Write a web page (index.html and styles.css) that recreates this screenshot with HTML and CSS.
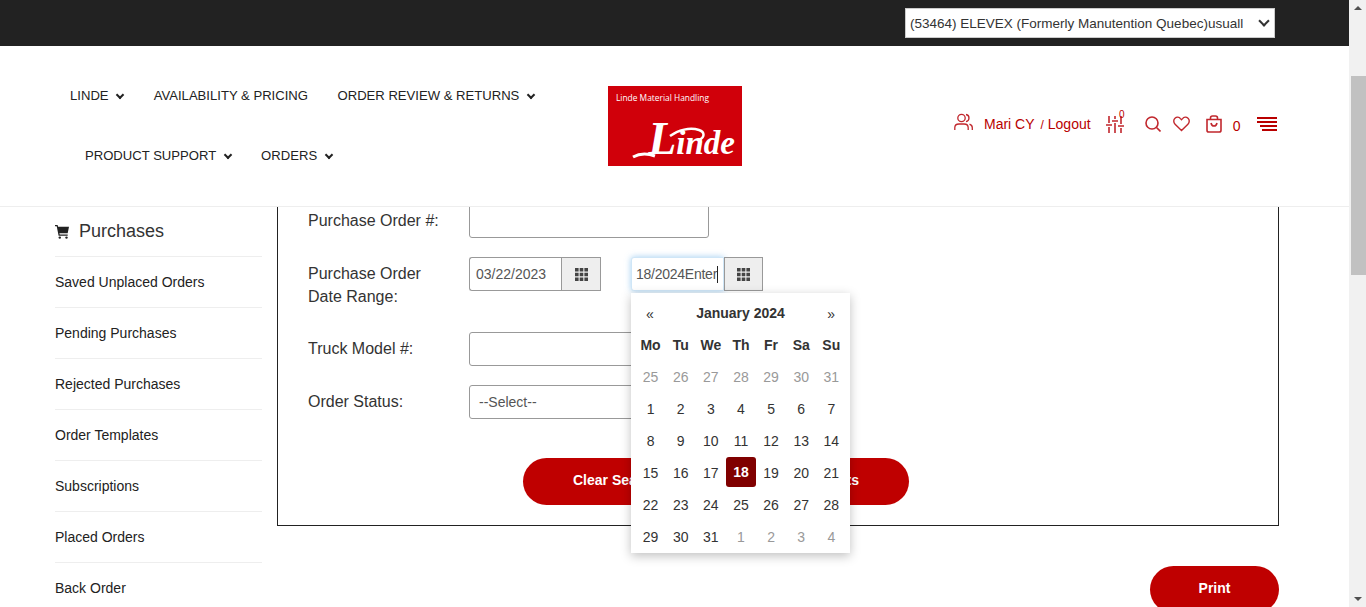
FILE: index.html
```html
<!DOCTYPE html>
<html lang="en">
<head>
    <meta charset="UTF-8">
    <meta name="viewport" content="width=device-width, initial-scale=1.0">
    <title>Purchases</title>
    <link rel="stylesheet" href="styles.css">
</head>
<body>
    <div class="page">
        <header class="site-header">
            <div class="topbar">
                <div class="select-wrap">
                    <select class="account-select">
                        <option>(53464) ELEVEX (Formerly Manutention Quebec)usuall</option>
                    </select>
                </div>
            </div>
            <div class="navbar">
                <nav class="main-nav">
                    <ul class="nav-row">
                        <li>LINDE <span class="caret"></span></li>
                        <li>AVAILABILITY &amp; PRICING</li>
                        <li>ORDER REVIEW &amp; RETURNS <span class="caret"></span></li>
                    </ul>
                    <ul class="nav-row nav-row-second">
                        <li>PRODUCT SUPPORT <span class="caret"></span></li>
                        <li>ORDERS <span class="caret"></span></li>
                    </ul>
                </nav>
                <div class="logo">
                    <span class="logo-tag">Linde Material Handling</span>
                    <svg class="logo-swoosh" width="134" height="80" viewBox="0 0 134 80">
                        <path d="M25 71c7-4 14-4 22-1" fill="none" stroke="#fff" stroke-width="3"/>
                        <path d="M62 50c8-6 20-9 29-6 6 2 6 7 0 10" fill="none" stroke="#fff" stroke-width="2.5"/>
                    </svg>
                    <span class="logo-name"><span class="logo-cap">L</span>inde</span>
                </div>
                <div class="user-tools">
                    <svg class="tool-user" width="19" height="18" viewBox="0 0 19 18" fill="none" stroke="#c1272d" stroke-width="1.3">
                        <circle cx="7.5" cy="5" r="3.7"/>
                        <path d="M.8 17v-2.2C.8 12.400 2.800 11 5 11h5c2.200 0 4.200 1.400 4.200 3.800V17"/>
                        <path d="M12 1.500c2 .3 3 2 3 3.600s-1 3.200-3 3.500M15.500 11.200c1.700.6 2.800 1.900 2.800 3.600V17"/>
                    </svg>
                    <span class="user-name">Mari CY</span>
                    <span class="user-logout"><small>/</small> Logout</span>
                    <span class="tool-filter">
                        <svg width="18" height="17" viewBox="0 0 18 17" fill="none" stroke="#c1272d" stroke-width="1.6">
                            <path d="M3 0v7M3 11v6M0 9h6M9 0v3M9 7v10M6 5h6M15 0v8M15 12v5M12 10h6"/>
                        </svg>
                        <sup>0</sup>
                    </span>
                    <svg class="tool-search" width="16" height="16" viewBox="0 0 16 16" fill="none" stroke="#c1272d" stroke-width="1.6">
                        <circle cx="7" cy="7" r="6"/>
                        <path d="M11.500 11.500L15.500 15.500"/>
                    </svg>
                    <svg class="tool-heart" width="18" height="16" viewBox="0 0 18 16" fill="none" stroke="#c1272d" stroke-width="1.5">
                        <path d="M9 14.800L2.200 8.200C.3 6.300.4 3.400 2.100 1.900c1.800-1.500 4.400-1.200 5.800.4L9 3.500l1.100-1.200c1.400-1.600 4-1.900 5.800-.4 1.700 1.500 1.800 4.400-.1 6.300z"/>
                    </svg>
                    <svg class="tool-bag" width="16" height="18" viewBox="0 0 16 18" fill="none" stroke="#c1272d" stroke-width="1.6">
                        <path d="M1 4.500h14v10.700c0 1-.8 1.800-1.800 1.800H2.800C1.800 17 1 16.200 1 15.200zM4.500 4.500V3c0-1.100.9-2 2-2h3c1.100 0 2 .9 2 2v1.500M5 8c.4 2 1.500 3 3 3s2.600-1 3-3"/>
                    </svg>
                    <span class="bag-count">0</span>
                    <span class="burger"><i></i><i></i><i></i><i></i></span>
                </div>
            </div>
        </header>

        <main class="content">
            <aside class="sidebar">
                <h3 class="side-title">
                    <svg width="14" height="14" viewBox="0 0 14 14" fill="#222">
                        <path d="M0 0h2.600l.5 1.800H14l-1.300 6.400H4.400l.3 1.300h8v1.200H3.600L1.700 1.200H0z"/>
                        <circle cx="4.800" cy="12.600" r="1.200"/>
                        <circle cx="11.500" cy="12.600" r="1.200"/>
                    </svg>
                    Purchases
                </h3>
                <a class="side-link">Saved Unplaced Orders</a>
                <a class="side-link">Pending Purchases</a>
                <a class="side-link">Rejected Purchases</a>
                <a class="side-link">Order Templates</a>
                <a class="side-link">Subscriptions</a>
                <a class="side-link">Placed Orders</a>
                <a class="side-link">Back Order</a>
            </aside>

            <section class="results">
                <form class="search-box">
                    <div class="form-row">
                        <label>Purchase Order #:</label>
                        <input class="field" type="text">
                    </div>
                    <div class="form-row form-row-tall">
                        <label>Purchase Order<br>Date Range:</label>
                        <div class="date-group">
                            <input class="date-input" type="text" value="03/22/2023">
                            <span class="date-addon">
                                <svg class="grid-icon" width="13" height="13" viewBox="0 0 13 13" fill="#444">
                                    <path d="M0 0h3.600v3.600H0zM4.700 0h3.600v3.600H4.700zM9.400 0H13v3.600H9.400zM0 4.700h3.600v3.600H0zM4.700 4.700h3.600v3.600H4.700zM9.400 4.700H13v3.600H9.400zM0 9.400h3.600V13H0zM4.700 9.400h3.600V13H4.700zM9.400 9.400H13V13H9.400z"/>
                                </svg>
                            </span>
                        </div>
                        <div class="date-group date-group-to">
                            <div class="date-input is-focus">18/2024Enter<span class="text-caret"></span></div>
                            <span class="date-addon">
                                <svg class="grid-icon" width="13" height="13" viewBox="0 0 13 13" fill="#444">
                                    <path d="M0 0h3.600v3.600H0zM4.700 0h3.600v3.600H4.700zM9.400 0H13v3.600H9.400zM0 4.700h3.600v3.600H0zM4.700 4.700h3.600v3.600H4.700zM9.400 4.700H13v3.600H9.400zM0 9.400h3.600V13H0zM4.700 9.400h3.600V13H4.700zM9.400 9.400H13V13H9.400z"/>
                                </svg>
                            </span>
                            <div class="calendar">
                                <div class="cal-head">
                                    <span>«</span>
                                    <b>January 2024</b>
                                    <span>»</span>
                                </div>
                                <div class="cal-grid">
                                    <b>Mo</b><b>Tu</b><b>We</b><b>Th</b><b>Fr</b><b>Sa</b><b>Su</b>
                                    <span class="off">25</span><span class="off">26</span><span class="off">27</span><span class="off">28</span><span class="off">29</span><span class="off">30</span><span class="off">31</span>
                                    <span>1</span><span>2</span><span>3</span><span>4</span><span>5</span><span>6</span><span>7</span>
                                    <span>8</span><span>9</span><span>10</span><span>11</span><span>12</span><span>13</span><span>14</span>
                                    <span>15</span><span>16</span><span>17</span><span class="today">18</span><span>19</span><span>20</span><span>21</span>
                                    <span>22</span><span>23</span><span>24</span><span>25</span><span>26</span><span>27</span><span>28</span>
                                    <span>29</span><span>30</span><span>31</span><span class="off">1</span><span class="off">2</span><span class="off">3</span><span class="off">4</span>
                                </div>
                            </div>
                        </div>
                    </div>
                    <div class="form-row">
                        <label>Truck Model #:</label>
                        <input class="field" type="text">
                    </div>
                    <div class="form-row">
                        <label>Order Status:</label>
                        <div class="field field-select">--Select--</div>
                    </div>
                    <div class="form-actions">
                        <button class="btn btn-clear" type="button">Clear Search</button>
                        <button class="btn btn-view" type="button">View Results</button>
                    </div>
                </form>
                <div class="print-row">
                    <button class="btn btn-print" type="button">Print</button>
                </div>
            </section>
        </main>
    </div>

    <div class="scrollbar">
        <span class="arrow-up"></span>
        <span class="thumb"></span>
        <span class="arrow-down"></span>
    </div>
</body>
</html>
```

FILE: styles.css
```css
* {
    box-sizing: border-box;
}
html, body {
    height: 100%;
}
body {
    display: flex;
    height: 607px;
    margin: 0;
    overflow: hidden;
    background: #fff;
    color: #333;
    font-family: "Liberation Sans", Arial, sans-serif;
    font-size: 14px;
}
.page {
    flex: 1;
    min-width: 0;
}

/* header */
.site-header {
    position: relative;
    z-index: 5;
    background: #fff;
}
.topbar {
    display: flex;
    justify-content: flex-end;
    height: 46px;
    padding: 8px 74px 0 0;
    background: #222;
}
.select-wrap {
    position: relative;
    width: 370px;
    height: 30px;
}
.select-wrap::after {
    content: "";
    position: absolute;
    top: 9px;
    right: 7px;
    width: 6px;
    height: 6px;
    border-right: 2px solid #333;
    border-bottom: 2px solid #333;
    transform: rotate(45deg);
}
.account-select {
    width: 100%;
    height: 30px;
    padding: 0 4px;
    border: 1px solid #ccc;
    border-radius: 0;
    background: #fff;
    color: #333;
    font-family: inherit;
    font-size: 13.5px;
    appearance: none;
}
.navbar {
    display: flex;
    height: 161px;
    border-bottom: 1px solid #eee;
}
.main-nav {
    width: 553px;
    padding-left: 70px;
}
.nav-row {
    display: flex;
    gap: 29.5px;
    align-items: center;
    height: 60px;
    margin: 19px 0 0;
    padding: 0;
    list-style: none;
    color: #222;
    font-size: 13.1px;
    white-space: nowrap;
}
.nav-row-second {
    margin: 0;
    padding-left: 15px;
}
.caret {
    display: inline-block;
    width: 6px;
    height: 6px;
    margin: 0 1px 2px 5px;
    border-right: 2px solid #222;
    border-bottom: 2px solid #222;
    transform: rotate(45deg);
}

/* logo */
.logo {
    position: relative;
    flex: none;
    width: 134px;
    height: 80px;
    margin: 40px 0 0 55px;
    background: #d0000a;
    color: #fff;
    overflow: hidden;
}
.logo-tag {
    position: absolute;
    top: 6px;
    left: 8px;
    font-family: "Open Sans", sans-serif;
    font-size: 8.400px;
    white-space: nowrap;
}
.logo-swoosh {
    position: absolute;
    top: 0;
    left: 0;
}
.logo-name {
    position: absolute;
    right: 7px;
    bottom: 0;
    font-family: "Liberation Serif", serif;
    font-size: 33px;
    font-style: italic;
    font-weight: bold;
    line-height: 46px;
}
.logo-cap {
    font-size: 46px;
}

/* right side tools */
.user-tools {
    display: flex;
    align-items: center;
    height: 156px;
    margin-left: 212px;
    color: #b90000;
    font-size: 14px;
    white-space: nowrap;
}
.user-name {
    margin-left: 11px;
}
.user-logout {
    margin-left: 6px;
}
.user-logout small {
    font-size: 12px;
}
.tool-user {
    margin-top: -4px;
}
.tool-filter {
    position: relative;
    display: flex;
    margin-left: 15px;
}
.tool-filter sup {
    position: absolute;
    top: -5px;
    right: -1px;
    font-size: 10px;
    line-height: 8px;
}
.tool-search {
    margin-left: 21px;
}
.tool-heart {
    width: 17px;
    margin: -1px 0 0 12px;
}
.tool-bag {
    margin: -1px 0 0 16px;
}
.bag-count {
    margin: 4px 0 0 11px;
}
.burger {
    display: flex;
    flex-direction: column;
    align-items: flex-end;
    gap: 2px;
    margin-left: 17px;
}
.burger i {
    display: block;
    width: 20px;
    height: 2px;
    background: #b90000;
}
.burger i:nth-child(3) {
    width: 17px;
}
.burger i:nth-child(4) {
    width: 15px;
}

/* page body, scrolled up under the header */
.content {
    display: flex;
    align-items: flex-start;
    margin-top: -30px;
    padding: 0 70px 0 55px;
}
.sidebar {
    flex: none;
    width: 207px;
    margin-top: 30px;
}
.side-title {
    display: flex;
    align-items: center;
    gap: 10px;
    height: 50px;
    margin: 0;
    border-bottom: 1px solid #eee;
    color: #333;
    font-size: 18px;
    font-weight: normal;
}
.side-link {
    display: flex;
    align-items: center;
    height: 51px;
    border-bottom: 1px solid #eee;
    color: #222;
    font-size: 14px;
}
.results {
    flex: 1;
    margin-left: 15px;
}
.search-box {
    height: 349px;
    padding: 26px 30px 0;
    border: 1px solid #222;
}
.form-row {
    display: flex;
    height: 34px;
    margin-bottom: 19px;
}
.form-row-tall {
    height: 56px;
}
.form-row label {
    flex: none;
    width: 161px;
    padding-top: 5px;
    color: #333;
    font-size: 16px;
    line-height: 23px;
}
.field {
    width: 240px;
    height: 34px;
    padding: 0 9px;
    border: 1px solid #999;
    border-radius: 3px;
    background: #fff;
    color: #555;
    font-family: inherit;
    font-size: 14px;
}
.field-select {
    line-height: 32px;
}
.date-group {
    display: flex;
    height: 34px;
}
.date-group-to {
    position: relative;
    margin-left: 30px;
}
.date-input {
    width: 92px;
    height: 34px;
    padding: 0 6px;
    border: 1px solid #999;
    border-right: 0;
    border-radius: 3px 0 0 3px;
    background: #fff;
    color: #555;
    font-family: inherit;
    font-size: 14px;
    line-height: 32px;
}
.is-focus {
    display: flex;
    align-items: center;
    width: 93px;
    padding: 0 4px;
    border: 1px solid #cfe6f7;
    box-shadow: 0 0 6px rgba(102, 175, 233, 0.6);
    letter-spacing: -0.25px;
    white-space: nowrap;
    overflow: hidden;
}
.text-caret {
    flex: none;
    width: 1px;
    height: 17px;
    background: #222;
}
.date-addon {
    display: flex;
    align-items: center;
    justify-content: center;
    width: 40px;
    border: 1px solid #999;
    background: #eee;
}
.date-group-to .date-addon {
    width: 39px;
}

/* date picker popup */
.calendar {
    position: absolute;
    z-index: 3;
    top: 36px;
    left: 0;
    width: 219px;
    height: 260px;
    padding: 0 4px 0 4.500px;
    background: #fff;
    box-shadow: 0 3px 10px rgba(0, 0, 0, 0.25);
    color: #333;
    font-size: 14px;
}
.cal-head {
    display: flex;
    align-items: center;
    justify-content: space-between;
    height: 36px;
    padding: 3px 11px 0 10.500px;
}
.cal-head span {
    margin-top: 2px;
}
.cal-grid {
    display: grid;
    grid-template-columns: repeat(7, 30.14px);
    grid-auto-rows: 32px;
    justify-items: center;
    align-items: center;
}
.cal-grid span,
.cal-grid b {
    display: flex;
    align-items: center;
    justify-content: center;
    width: 30px;
    height: 30px;
}
.cal-grid .off {
    color: #999;
}
.cal-grid .today {
    margin-bottom: 2px;
    border-radius: 3px;
    background: #800000;
    color: #fff;
    font-weight: bold;
}

/* buttons */
.form-actions {
    display: flex;
    gap: 20px;
    margin: 39px 0 0 215px;
}
.btn {
    height: 47px;
    padding: 0 0 4px;
    border: 0;
    border-radius: 24px;
    background: #bf0000;
    color: #fff;
    font-family: inherit;
    font-size: 14px;
    font-weight: bold;
}
.btn-clear {
    width: 177px;
    padding-left: 50px;
    text-align: left;
    white-space: nowrap;
}
.btn-view {
    width: 189px;
    padding-right: 50px;
    text-align: right;
    white-space: nowrap;
}
.print-row {
    display: flex;
    justify-content: flex-end;
    margin-top: 40px;
}
.btn-print {
    width: 129px;
}

/* fake window scrollbar, the page is shown scrolled */
.scrollbar {
    display: flex;
    flex: none;
    flex-direction: column;
    align-items: center;
    width: 17px;
    height: 607px;
    background: #f1f1f1;
}
.arrow-up {
    margin-top: 6px;
    border-right: 4px solid transparent;
    border-bottom: 4px solid #505050;
    border-left: 4px solid transparent;
}
.thumb {
    width: 15px;
    height: 199px;
    margin: 66px 0 0 1px;
    background: #c1c1c1;
}
.arrow-down {
    margin-top: auto;
    margin-bottom: 6px;
    border-top: 4px solid #505050;
    border-right: 4px solid transparent;
    border-left: 4px solid transparent;
}
```
